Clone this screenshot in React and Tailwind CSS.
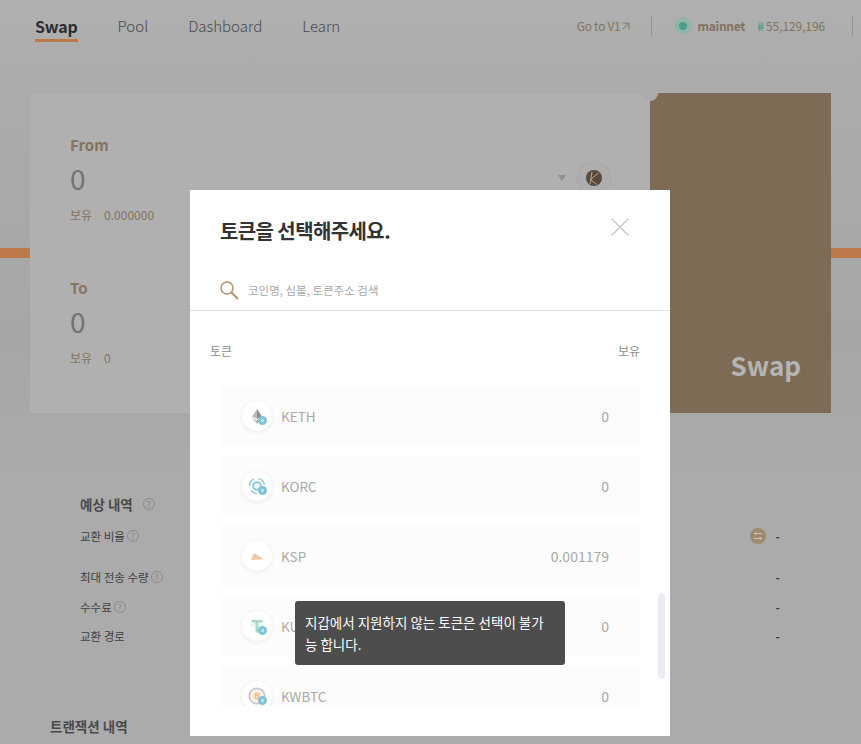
import React from 'react';
import { ArrowUpRight } from 'lucide-react';

const sans = 'font-["Noto_Sans_CJK_KR","Noto_Sans",sans-serif]';

const KethIcon = () => (
  <svg width="12" height="15" viewBox="0 0 12 15">
    <path d="M6 0 L1 7.5 L6 10 Z" fill="#bdbdbd" />
    <path d="M6 0 L11 7.5 L6 10 Z" fill="#8f8f8f" />
    <path d="M1 8.8 L6 15 L6 11.3 Z" fill="#c8c8c8" />
    <path d="M11 8.8 L6 15 L6 11.3 Z" fill="#a0a0a0" />
  </svg>
);

const KorcIcon = () => (
  <svg width="18" height="18" viewBox="0 0 18 18" fill="none" stroke="#8cc8d8">
    <circle cx="9" cy="9" r="3.8" strokeWidth="2" />
    <path d="M1.5 9a7.5 7.5 0 0 1 4.6-6.9M10.5 1.6A7.5 7.5 0 0 1 16.4 8M3 13.5A7.5 7.5 0 0 0 9 16.5" strokeWidth="1.3" />
  </svg>
);

const KspIcon = () => (
  <svg width="13" height="7" viewBox="0 0 13 7">
    <path d="M3 0 L13 6.2 L0 7 Z" fill="#f7c6a3" />
  </svg>
);

const KusdtIcon = () => (
  <svg width="14" height="14" viewBox="0 0 14 14">
    <path d="M1.5 1 H12.5 V3.5 H8.5 V13.5 H5.5 V3.5 H1.5 Z" fill="#a5d8c8" />
    <ellipse cx="7" cy="6" rx="6.5" ry="1.2" fill="none" stroke="#c5e6db" strokeWidth="0.6" />
  </svg>
);

const KwbtcIcon = () => (
  <svg width="18" height="18" viewBox="0 0 18 18">
    <circle cx="9" cy="9" r="7.6" fill="none" stroke="#c8c8ce" strokeWidth="2" />
    <circle cx="9" cy="9" r="4.8" fill="#fce3cc" />
    <text x="9" y="11.8" fontSize="7.5" textAnchor="middle" fill="#f0a868">B</text>
  </svg>
);

const KlayLogo = () => (
  <svg width="16" height="16" viewBox="0 0 16 16">
    <circle cx="8" cy="8" r="8" fill="#5a4a3c" />
    <path d="M6 2 L4 14 M12.5 3 L4.5 9.5 L10.5 14.5" fill="none" stroke="#b5aaa0" strokeWidth="1" />
  </svg>
);

const SearchIcon = () => (
  <svg width="19" height="19" viewBox="0 0 19 19" fill="none" stroke="#b3946e">
    <circle cx="7" cy="7" r="6" strokeWidth="1.5" />
    <path d="M11.5 11.5 L18 18" strokeWidth="2" />
  </svg>
);

const tokens = [
  { name: 'KETH', amount: '0', icon: <KethIcon /> },
  { name: 'KORC', amount: '0', icon: <KorcIcon /> },
  { name: 'KSP', amount: '0.001179', icon: <KspIcon />, plain: true },
  { name: 'KUSDT', amount: '0', icon: <KusdtIcon /> },
  { name: 'KWBTC', amount: '0', icon: <KwbtcIcon /> },
];

const Help = () => (
  <span className="inline-flex w-[12px] h-[12px] items-center justify-center rounded-full border border-[#8b8b8b] text-[8px] leading-none text-[#8b8b8b]">?</span>
);

const InfoRow = ({ label, help, className }) => (
  <div className={`flex items-center justify-between ${className}`}>
    <div className="flex items-center gap-[2px] text-[11.5px] leading-[16px] text-[#3f3f3f]">
      {label}
      {help && <Help />}
    </div>
    <span className="text-[12px] font-bold leading-[16px] text-[#4a3c2e]">-</span>
  </div>
);

const TokenRow = ({ token }) => (
  <div className="flex items-center justify-between h-[60px] shrink-0 bg-[#fcfcfc] pl-[22px] pr-[31px]">
    <div className="flex items-center gap-[9px]">
      <div className="relative flex w-[30px] h-[30px] items-center justify-center rounded-full bg-white shadow-[0_1px_5px_rgba(0,0,0,0.08)]">
        {token.icon}
        {!token.plain && (
          <span className="absolute right-[5px] bottom-[6px] flex w-[9px] h-[9px] items-center justify-center rounded-full bg-[#7fc4d8]">
            <span className="w-[3px] h-[3px] rounded-full border-[0.5px] border-white" />
          </span>
        )}
      </div>
      <span className="text-[13.5px] text-[#a9a9a9]">{token.name}</span>
    </div>
    <span className="text-[14px] text-[#a9a9a9]">{token.amount}</span>
  </div>
);

const AmountBlock = ({ label, balance, className, children }) => (
  <div className={className}>
    <div className="text-[15px] font-bold leading-[24px] text-[#85735c]">{label}</div>
    <div className="flex items-center justify-between h-[36px] mt-[3px]">
      <span className="text-[28px] text-[#737373]">0</span>
      {children}
    </div>
    <div className="flex gap-[12px] mt-[10px] text-[12px] leading-[18px] text-[#85735c]">
      <span>보유</span><span>{balance}</span>
    </div>
  </div>
);

export default function App() {
  return (
    <div className={`relative h-[744px] overflow-hidden bg-[linear-gradient(180deg,#b0b0b0_0,#ababab_90px,#a5a6a7_340px,#aaabaa_500px,#ababab_744px)] ${sans}`}>
      {/* header */}
      <header className="flex h-[53px] items-start justify-between pl-[35px] pr-[8px] pt-[15px]">
        <nav className="flex items-start gap-[40px] text-[15px] font-light leading-[22px] text-[#4a4a4a]">
          <a className="h-[27px] border-b-[3px] border-[#bd7849] text-[16px] font-bold tracking-[-0.2px] text-[#2e2e2e]">Swap</a>
          <a>Pool</a>
          <a>Dashboard</a>
          <a>Learn</a>
        </nav>
        <div className="flex items-center h-[22px] text-[12px] text-[#84725c]">
          <span className="flex items-center tracking-[-0.3px]">Go to V1<ArrowUpRight size={14} strokeWidth={1.5} className="-ml-[1px]" /></span>
          <span className="ml-[18px] mr-[22px] h-[20px] w-px bg-[#939393]" />
          <span className="flex w-[18px] h-[18px] items-center justify-center rounded-full bg-[#94b3a9]">
            <span className="w-[8px] h-[8px] rounded-full bg-[#4a9f8b]" />
          </span>
          <span className="ml-[5px] font-bold tracking-[-0.3px]">mainnet</span>
          <span className="ml-[12px] font-bold text-[#4a9f8b]">#</span>
          <span className="ml-[2px] tracking-[-0.1px]">55,129,196</span>
          <span className="ml-[27px] h-[20px] w-px bg-[#939393]" />
        </div>
      </header>

      {/* swap panel */}
      <main className="relative px-[30px] pt-[40px]">
        <div className="absolute left-0 right-0 top-[195px] h-[10px] bg-[#bd7849]" />
        <div className="relative flex h-[320px]">
          <div className="w-[620px] bg-[#b0b0b0] pl-[40px] pr-[40px] pt-[40px]">
            <AmountBlock label="From" balance="0.000000">
              <div className="flex items-center gap-[12px]">
                <span className="w-0 h-0 border-x-[4px] border-t-[6px] border-x-transparent border-t-[#8c8f93]" />
                <span className="flex w-[32px] h-[32px] items-center justify-center rounded-full bg-[#aeaeae] shadow-[0_0_3px_rgba(0,0,0,0.1)]">
                  <KlayLogo />
                </span>
              </div>
            </AmountBlock>
            <AmountBlock label="To" balance="0" className="mt-[52px]" />
          </div>
          <div className="relative flex-1 bg-[#7d6b56] flex items-end justify-end pr-[30px] pb-[28px]">
            <span className="absolute -left-[8px] -top-[8px] w-[16px] h-[16px] rounded-full bg-[#ababab]" />
            <span className="text-[26px] font-bold leading-[40px] text-[#b5b5b5]">Swap</span>
          </div>
        </div>

        {/* expected details */}
        <section className="pl-[50px] pr-[51px] pt-[81px]">
          <div className="flex items-center gap-[10px] text-[13.5px] font-bold leading-[20px] text-[#4a4a4a]">
            예상 내역 <Help />
          </div>
          <InfoRow label="교환 비율" help className="mt-[14px]" />
          <InfoRow label="최대 전송 수량" help className="mt-[25px]" />
          <InfoRow label="수수료" help className="mt-[14px]" />
          <InfoRow label="교환 경로" className="mt-[13px]" />
        </section>
        <div className="pl-[20px] pt-[72px] text-[13.5px] font-bold leading-[20px] text-[#4a4a4a]">트랜잭션 내역</div>
      </main>

      {/* rate swap icon */}
      <span className="absolute left-[750px] top-[528px] flex w-[16px] h-[16px] items-center justify-center rounded-full bg-[#a08a6e]">
        <svg width="10" height="10" viewBox="0 0 10 10" fill="none" stroke="#d8d0c4" strokeWidth="0.8">
          <path d="M9 2.5 H1.5 M3.3 0.7 L1.5 2.5 L3.3 4.3 M1 7.5 H8.5 M6.7 5.7 L8.5 7.5 L6.7 9.3" />
        </svg>
      </span>

      {/* token modal */}
      <div className="absolute left-[190px] top-[190px] flex h-[546px] w-[480px] flex-col bg-white">
        <div className="flex items-center justify-between pl-[30px] pr-[41px] pt-[25px]">
          <h2 className="text-[20px] font-bold leading-[32px] tracking-[-0.6px] text-[#333333]">토큰을 선택해주세요.</h2>
          <svg className="mb-[8px]" width="18" height="18" viewBox="0 0 18 18" stroke="#c4c4c4" strokeWidth="1.2">
            <path d="M0.5 0.5 L17.5 17.5 M17.5 0.5 L0.5 17.5" />
          </svg>
        </div>
        <div className="flex h-[40px] items-center gap-[9px] mt-[24px] pl-[30px] border-b border-[#dfe1ea]">
          <SearchIcon />
          <span className="text-[11.5px] text-[#a8a8a8]">코인명, 심볼, 토큰주소 검색</span>
        </div>
        <div className="flex justify-between pl-[20px] pr-[30px] pt-[31px] text-[12px] leading-[18px] text-[#8f8f8f]">
          <span>토큰</span><span>보유</span>
        </div>
        <div className="relative mt-[26px] pl-[30px] pr-[30px]">
          <div className="flex h-[320px] flex-col gap-[10px] overflow-hidden">
            {tokens.map((token) => <TokenRow key={token.name} token={token} />)}
          </div>
          <div className="absolute right-[5px] top-[207px] h-[86px] w-[7px] rounded-full bg-[#e9edf3]" />
        </div>
      </div>

      {/* tooltip */}
      <div className="absolute left-[295px] top-[601px] w-[270px] break-all rounded-[3px] bg-[#4d4d4d] px-[10px] py-[10px] text-[13.5px] leading-[22px] text-white">
        지갑에서 지원하지 않는 토큰은 선택이 불가능 합니다.
      </div>
    </div>
  );
}
